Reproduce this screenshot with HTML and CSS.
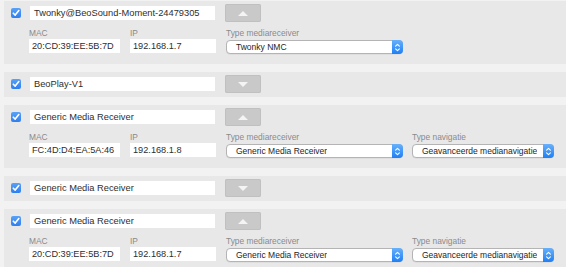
FILE: index.html
```html
<!DOCTYPE html>
<html>
<head>
<meta charset="utf-8">
<link rel="stylesheet" href="styles.css">
</head>
<body>
<div class="page">
  <div class="head"><span class="h-name">Apparaat</span><span class="h-type">Type</span></div>

  <div class="card">
    <div class="row">
      <span class="check"><svg viewBox="0 0 10 10" width="10" height="10"><path d="M2.3 5.2 L4.2 7.1 L7.8 2.6" fill="none" stroke="#fff" stroke-width="1.6" stroke-linecap="round" stroke-linejoin="round"/></svg></span>
      <div class="name">Twonky@BeoSound-Moment-24479305</div>
      <div class="btn up"><span class="tri"></span></div>
    </div>
    <div class="details">
      <div class="field f-mac"><div class="lbl">MAC</div><div class="inp">20:CD:39:EE:5B:7D</div></div>
      <div class="field f-ip"><div class="lbl">IP</div><div class="inp">192.168.1.7</div></div>
      <div class="field f-type"><div class="lbl">Type mediareceiver</div><div class="sel"><span class="sel-txt">Twonky NMC</span><span class="step"><svg viewBox="0 0 11 13" width="11" height="13"><path d="M3.6 5.2 L5.5 3.4 L7.4 5.2 M3.6 7.8 L5.5 9.6 L7.4 7.8" fill="none" stroke="#fff" stroke-width="1.1" stroke-linecap="round" stroke-linejoin="round"/></svg></span></div></div>
    </div>
  </div>

  <div class="card">
    <div class="row">
      <span class="check"><svg viewBox="0 0 10 10" width="10" height="10"><path d="M2.3 5.2 L4.2 7.1 L7.8 2.6" fill="none" stroke="#fff" stroke-width="1.6" stroke-linecap="round" stroke-linejoin="round"/></svg></span>
      <div class="name">BeoPlay-V1</div>
      <div class="btn down"><span class="tri"></span></div>
    </div>
  </div>

  <div class="card">
    <div class="row">
      <span class="check"><svg viewBox="0 0 10 10" width="10" height="10"><path d="M2.3 5.2 L4.2 7.1 L7.8 2.6" fill="none" stroke="#fff" stroke-width="1.6" stroke-linecap="round" stroke-linejoin="round"/></svg></span>
      <div class="name">Generic Media Receiver</div>
      <div class="btn up"><span class="tri"></span></div>
    </div>
    <div class="details">
      <div class="field f-mac"><div class="lbl">MAC</div><div class="inp">FC:4D:D4:EA:5A:46</div></div>
      <div class="field f-ip"><div class="lbl">IP</div><div class="inp">192.168.1.8</div></div>
      <div class="field f-type"><div class="lbl">Type mediareceiver</div><div class="sel"><span class="sel-txt">Generic Media Receiver</span><span class="step"><svg viewBox="0 0 11 13" width="11" height="13"><path d="M3.6 5.2 L5.5 3.4 L7.4 5.2 M3.6 7.8 L5.5 9.6 L7.4 7.8" fill="none" stroke="#fff" stroke-width="1.1" stroke-linecap="round" stroke-linejoin="round"/></svg></span></div></div>
      <div class="field f-nav"><div class="lbl">Type navigatie</div><div class="sel"><span class="sel-txt">Geavanceerde medianavigatie</span><span class="step"><svg viewBox="0 0 11 13" width="11" height="13"><path d="M3.6 5.2 L5.5 3.4 L7.4 5.2 M3.6 7.8 L5.5 9.6 L7.4 7.8" fill="none" stroke="#fff" stroke-width="1.1" stroke-linecap="round" stroke-linejoin="round"/></svg></span></div></div>
    </div>
  </div>

  <div class="card">
    <div class="row">
      <span class="check"><svg viewBox="0 0 10 10" width="10" height="10"><path d="M2.3 5.2 L4.2 7.1 L7.8 2.6" fill="none" stroke="#fff" stroke-width="1.6" stroke-linecap="round" stroke-linejoin="round"/></svg></span>
      <div class="name">Generic Media Receiver</div>
      <div class="btn down"><span class="tri"></span></div>
    </div>
  </div>

  <div class="card">
    <div class="row">
      <span class="check"><svg viewBox="0 0 10 10" width="10" height="10"><path d="M2.3 5.2 L4.2 7.1 L7.8 2.6" fill="none" stroke="#fff" stroke-width="1.6" stroke-linecap="round" stroke-linejoin="round"/></svg></span>
      <div class="name">Generic Media Receiver</div>
      <div class="btn up"><span class="tri"></span></div>
    </div>
    <div class="details">
      <div class="field f-mac"><div class="lbl">MAC</div><div class="inp">20:CD:39:EE:5B:7D</div></div>
      <div class="field f-ip"><div class="lbl">IP</div><div class="inp">192.168.1.7</div></div>
      <div class="field f-type"><div class="lbl">Type mediareceiver</div><div class="sel"><span class="sel-txt">Generic Media Receiver</span><span class="step"><svg viewBox="0 0 11 13" width="11" height="13"><path d="M3.6 5.2 L5.5 3.4 L7.4 5.2 M3.6 7.8 L5.5 9.6 L7.4 7.8" fill="none" stroke="#fff" stroke-width="1.1" stroke-linecap="round" stroke-linejoin="round"/></svg></span></div></div>
      <div class="field f-nav"><div class="lbl">Type navigatie</div><div class="sel"><span class="sel-txt">Geavanceerde medianavigatie</span><span class="step"><svg viewBox="0 0 11 13" width="11" height="13"><path d="M3.6 5.2 L5.5 3.4 L7.4 5.2 M3.6 7.8 L5.5 9.6 L7.4 7.8" fill="none" stroke="#fff" stroke-width="1.1" stroke-linecap="round" stroke-linejoin="round"/></svg></span></div></div>
    </div>
  </div>
</div>
</body>
</html>
```

FILE: styles.css
```css
html, body {
  margin: 0;
  padding: 0;
  background: #f2f2f2;
  overflow: hidden;
}
body {
  font-family: "Liberation Sans", "DejaVu Sans", sans-serif;
  color: #2a2a2a;
}
.page {
  display: flex;
  flex-direction: column;
  gap: 8px;
  padding: 1px 0 0 4px;
}
.head {
  display: flex;
  height: 12px;
  margin-top: -12px;
  margin-bottom: -8px;
  font-size: 10px;
  line-height: 12px;
  color: #666;
}
.h-name { margin-left: 26px; }
.h-type { margin-left: 158px; }
.card {
  background: #e8e8e8;
  padding: 3px 0 4px 6px;
  display: flex;
  flex-direction: column;
}
.card:has(.details) { padding-bottom: 10px; }
.row {
  display: flex;
  align-items: center;
  height: 18px;
}
.check {
  width: 10px;
  height: 10px;
  border-radius: 2px;
  background: linear-gradient(#5aa2f7, #2d7ef0);
  display: flex;
  margin-left: 1px;
  margin-right: 9px;
}
.name {
  width: 181px;
  height: 14px;
  background: #fff;
  font-size: 9.3px;
  line-height: 14px;
  padding-left: 4px;
  white-space: nowrap;
  overflow: hidden;
  color: #2e2e2e;
}
.btn {
  width: 36px;
  height: 18px;
  margin-left: 10px;
  background: #c9c9c9;
  border-radius: 2px;
  box-shadow: inset 0 0 0 1px #c0c0c0;
  display: flex;
  align-items: center;
  justify-content: center;
}
.tri {
  width: 0;
  height: 0;
  border-left: 5px solid transparent;
  border-right: 5px solid transparent;
}
.up .tri { border-bottom: 5px solid #f4f4f4; }
.down .tri { border-top: 5px solid #f4f4f4; }
.details {
  display: flex;
  margin-top: 6px;
  margin-left: 19px;
}
.field { display: flex; flex-direction: column; }
.f-mac { width: 91px; }
.f-ip { width: 86px; margin-left: 10px; }
.f-type { width: 177px; margin-left: 10px; }
.f-nav { width: 142px; margin-left: 9px; }
.lbl {
  font-size: 8.4px;
  line-height: 10px;
  height: 10px;
  color: #8a8a8a;
  margin-bottom: 1px;
  white-space: nowrap;
}
.inp {
  height: 14px;
  background: #fff;
  font-size: 9.2px;
  line-height: 14px;
  padding-left: 3px;
  white-space: nowrap;
  overflow: hidden;
  color: #2e2e2e;
}
.sel {
  height: 12px;
  margin-top: 1px;
  background: #fff;
  border: 1px solid #b4b4b4;
  border-radius: 4px;
  display: flex;
  align-items: center;
  justify-content: space-between;
  box-shadow: 0 0.5px 0 rgba(0,0,0,0.08);
}
.sel-txt {
  font-size: 8.5px;
  line-height: 12px;
  padding-left: 9px;
  white-space: nowrap;
  overflow: hidden;
  color: #1e1e1e;
}
.step {
  flex: none;
  width: 11px;
  height: 14px;
  margin: -1px -1px -1px 0;
  border-radius: 0 4px 4px 0;
  background: linear-gradient(#68b0fb, #1f7ff5);
  display: flex;
  align-items: center;
  justify-content: center;
}
.step svg { display: block; }
```
